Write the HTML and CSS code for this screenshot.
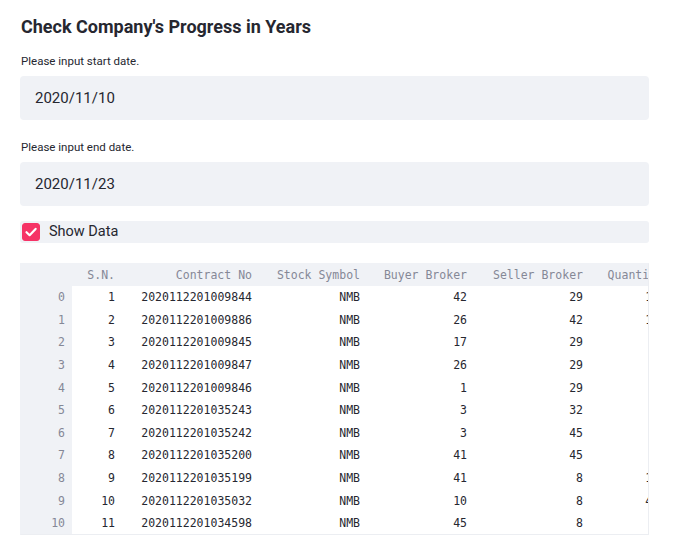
FILE: index.html
```html
<!DOCTYPE html>
<html>
<head>
<meta charset="utf-8">
<link rel="stylesheet" href="styles.css">
</head>
<body>
<main class="main">
  <h1 class="title">Check Company's Progress in Years</h1>
  <label class="label">Please input start date.</label>
  <div class="input">2020/11/10</div>
  <label class="label label-2">Please input end date.</label>
  <div class="input">2020/11/23</div>
  <div class="check-row">
    <span class="box checked">
      <svg viewBox="0 0 18 18" width="18" height="18"><path d="M4.5 9.2 L7.6 12.2 L13.6 5.9" fill="none" stroke="#fff" stroke-width="2.2" stroke-linecap="round" stroke-linejoin="round"/></svg>
    </span>
    <span class="check-label">Show Data</span>
  </div>
  <div class="table-wrap">
    <table class="df">
      <colgroup>
        <col class="c-idx"><col class="c-sn"><col class="c-contract"><col class="c-sym"><col class="c-buy"><col class="c-sell"><col class="c-qty">
      </colgroup>
      <thead>
        <tr><th class="idx"></th><th>S.N.</th><th>Contract No</th><th>Stock Symbol</th><th>Buyer Broker</th><th>Seller Broker</th><th>Quantity</th></tr>
      </thead>
      <tbody>
        <tr><th class="idx">0</th><td>1</td><td>2020112201009844</td><td>NMB</td><td>42</td><td>29</td><td class="qty">100</td></tr>
        <tr><th class="idx">1</th><td>2</td><td>2020112201009886</td><td>NMB</td><td>26</td><td>42</td><td class="qty">100</td></tr>
        <tr><th class="idx">2</th><td>3</td><td>2020112201009845</td><td>NMB</td><td>17</td><td>29</td><td class="qty">50</td></tr>
        <tr><th class="idx">3</th><td>4</td><td>2020112201009847</td><td>NMB</td><td>26</td><td>29</td><td class="qty">50</td></tr>
        <tr><th class="idx">4</th><td>5</td><td>2020112201009846</td><td>NMB</td><td>1</td><td>29</td><td class="qty">20</td></tr>
        <tr><th class="idx">5</th><td>6</td><td>2020112201035243</td><td>NMB</td><td>3</td><td>32</td><td class="qty">10</td></tr>
        <tr><th class="idx">6</th><td>7</td><td>2020112201035242</td><td>NMB</td><td>3</td><td>45</td><td class="qty">10</td></tr>
        <tr><th class="idx">7</th><td>8</td><td>2020112201035200</td><td>NMB</td><td>41</td><td>45</td><td class="qty">30</td></tr>
        <tr><th class="idx">8</th><td>9</td><td>2020112201035199</td><td>NMB</td><td>41</td><td>8</td><td class="qty">100</td></tr>
        <tr><th class="idx">9</th><td>10</td><td>2020112201035032</td><td>NMB</td><td>10</td><td>8</td><td class="qty">400</td></tr>
        <tr><th class="idx">10</th><td>11</td><td>2020112201034598</td><td>NMB</td><td>45</td><td>8</td><td class="qty">40</td></tr>
      </tbody>
    </table>
  </div>
  <div class="check-row plain">
    <span class="box"></span>
  </div>
</main>
</body>
</html>
```
FILE: styles.css
```css
html, body {
  margin: 0;
  padding: 0;
  background: #ffffff;
  overflow: hidden;
}
body {
  font-family: Roboto, "Noto Sans", sans-serif;
  color: #262730;
}
.main {
  width: 629px;
  padding: 15px 0 0 20px;
  display: flex;
  flex-direction: column;
}
.title {
  margin: 0 0 0 1px;
  font-size: 18px;
  line-height: 24px;
  font-weight: 700;
  color: #262730;
}
.label {
  display: block;
  margin: 14px 0 7px 1px;
  font-size: 11.5px;
  line-height: 16px;
}
.label-2 {
  margin-top: 19px;
}
.input {
  height: 44px;
  box-sizing: border-box;
  background: #f0f2f6;
  border-radius: 4px;
  padding-left: 15px;
  display: flex;
  align-items: center;
  font-size: 15px;
}
.check-row {
  margin-top: 15px;
  height: 22px;
  background: #f0f2f6;
  border-radius: 3px;
  display: flex;
  align-items: center;
  gap: 9px;
  padding-left: 2px;
}
.check-row.plain {
  margin-top: 17px;
  background: transparent;
}
.box {
  width: 18px;
  height: 18px;
  box-sizing: border-box;
  border-radius: 3px;
  border: 1px solid #c9ccd4;
  background: #fff;
  display: flex;
}
.box.checked {
  background: #f63366;
  border-color: #f63366;
}
.box.checked svg {
  margin: -1px;
}
.check-label {
  font-size: 14.5px;
  line-height: 22px;
}
.table-wrap {
  margin-top: 20px;
  width: 629px;
  height: 272px;
  box-sizing: border-box;
  border: 1px solid #eceef2;
  border-left-color: #f0f2f6;
  border-top-color: #f0f2f6;
  overflow: hidden;
}
.df {
  border-collapse: collapse;
  table-layout: fixed;
  width: 649px;
  font-family: "DejaVu Sans Mono", "Liberation Mono", monospace;
  font-size: 11.5px;
  color: #262730;
}
.c-idx { width: 51px; }
.c-sn { width: 50px; }
.c-contract { width: 137px; }
.c-sym { width: 108px; }
.c-buy { width: 107px; }
.c-sell { width: 116px; }
.c-qty { width: 80px; }
.df th, .df td {
  padding: 0 7px 0 0;
  text-align: right;
  white-space: nowrap;
  font-weight: 400;
}
.df td.qty {
  padding-right: 4px;
}
.df thead tr {
  height: 22px;
  background: #f0f2f6;
}
.df thead th {
  color: #858896;
}
.df tbody tr {
  height: 22.6px;
}
.df th.idx {
  background: #f0f2f6;
  color: #858896;
}
```
